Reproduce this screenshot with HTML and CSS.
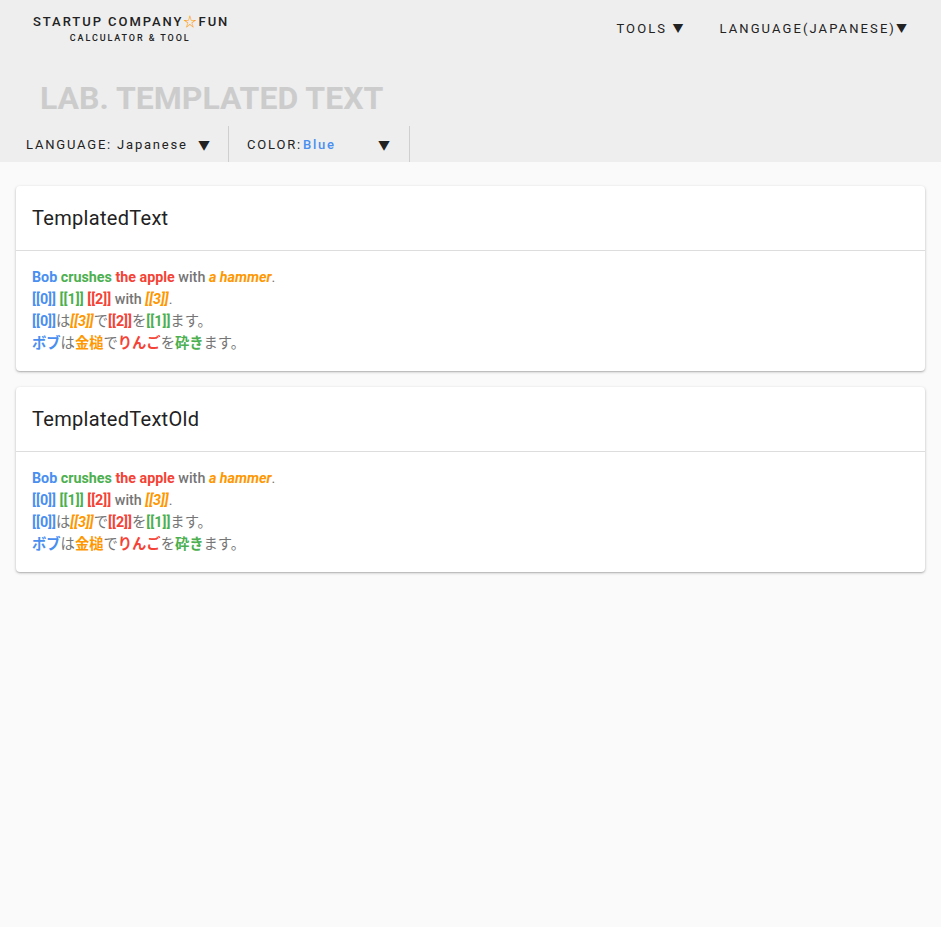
FILE: index.html
```html
<!DOCTYPE html>
<html>
<head>
<meta charset="utf-8">
<link rel="stylesheet" href="styles.css">
</head>
<body>
<header class="header">
  <div class="topbar">
    <div class="logo">
      <div class="logo-main">STARTUP COMPANY<span class="star">☆</span>FUN</div>
      <div class="logo-sub">CALCULATOR &amp; TOOL</div>
    </div>
    <nav class="nav">
      <span class="nav-item">TOOLS <span class="nav-arrow">▼</span></span>
      <span class="nav-item">LANGUAGE(JAPANESE)<span class="nav-arrow">▼</span></span>
    </nav>
  </div>
  <h1 class="title">LAB. TEMPLATED TEXT</h1>
  <div class="toolbar">
    <div class="tool tool-lang"><span>LANGUAGE: Japanese</span><span class="arrow">▼</span></div>
    <div class="tool tool-color"><span>COLOR:<span class="blue-val">Blue</span></span><span class="arrow">▼</span></div>
  </div>
</header>
<main class="main">
  <section class="card">
    <div class="card-head">TemplatedText</div>
    <div class="card-body">
      <div><b class="c-blue">Bob</b> <b class="c-green">crushes</b> <b class="c-red">the apple</b> <span class="c-gray b">with</span> <b class="c-orange i">a hammer</b><span class="c-gray">.</span></div>
      <div><b class="c-blue">[[0]]</b> <b class="c-green">[[1]]</b> <b class="c-red">[[2]]</b> <span class="c-gray b">with</span> <b class="c-orange i">[[3]]</b><span class="c-gray">.</span></div>
      <div><b class="c-blue">[[0]]</b><span class="c-gray">は</span><b class="c-orange i">[[3]]</b><span class="c-gray">で</span><b class="c-red">[[2]]</b><span class="c-gray">を</span><b class="c-green">[[1]]</b><span class="c-gray">ます。</span></div>
      <div><b class="c-blue">ボブ</b><span class="c-gray">は</span><b class="c-orange">金槌</b><span class="c-gray">で</span><b class="c-red">りんご</b><span class="c-gray">を</span><b class="c-green">砕き</b><span class="c-gray">ます。</span></div>
    </div>
  </section>
  <section class="card">
    <div class="card-head">TemplatedTextOld</div>
    <div class="card-body">
      <div><b class="c-blue">Bob</b> <b class="c-green">crushes</b> <b class="c-red">the apple</b> <span class="c-gray b">with</span> <b class="c-orange i">a hammer</b><span class="c-gray">.</span></div>
      <div><b class="c-blue">[[0]]</b> <b class="c-green">[[1]]</b> <b class="c-red">[[2]]</b> <span class="c-gray b">with</span> <b class="c-orange i">[[3]]</b><span class="c-gray">.</span></div>
      <div><b class="c-blue">[[0]]</b><span class="c-gray">は</span><b class="c-orange i">[[3]]</b><span class="c-gray">で</span><b class="c-red">[[2]]</b><span class="c-gray">を</span><b class="c-green">[[1]]</b><span class="c-gray">ます。</span></div>
      <div><b class="c-blue">ボブ</b><span class="c-gray">は</span><b class="c-orange">金槌</b><span class="c-gray">で</span><b class="c-red">りんご</b><span class="c-gray">を</span><b class="c-green">砕き</b><span class="c-gray">ます。</span></div>
    </div>
  </section>
</main>
</body>
</html>
```

FILE: styles.css
```css
* { box-sizing: border-box; }
html, body { margin: 0; padding: 0; }
body {
  background: #fafafa;
  font-family: Roboto, "Noto Sans CJK JP", sans-serif;
  color: #222;
}
.header {
  background: #eeeeee;
  height: 162px;
}
.topbar {
  display: flex;
  justify-content: space-between;
  align-items: flex-start;
  padding: 13px 34px 0 33px;
  height: 64px;
}
.logo {
  display: flex;
  flex-direction: column;
  align-items: center;
}
.logo-main {
  font-size: 13px;
  font-weight: 500;
  letter-spacing: 1.95px;
  color: #222;
  line-height: 17px;
  margin-right: -2px;
}
.star { color: #ff9800; letter-spacing: 0; margin-right: 2px; }
.logo-sub {
  font-size: 9px;
  font-weight: 500;
  letter-spacing: 1.9px;
  color: #222;
  line-height: 12px;
  margin-top: 2px;
}
.nav {
  display: flex;
  gap: 36px;
  padding-top: 7px;
}
.nav-item {
  font-size: 13px;
  font-weight: 400;
  letter-spacing: 2.1px;
  color: #222;
  line-height: 17px;
}
.nav-arrow { font-size: 11px; letter-spacing: 0; }
.title {
  margin: 0;
  padding: 15px 0 0 40px;
  font-size: 32px;
  font-weight: 700;
  color: #cccccc;
  line-height: 38px;
  height: 62px;
}
.toolbar {
  display: flex;
  height: 36px;
}
.tool {
  display: flex;
  align-items: center;
  justify-content: space-between;
  border-right: 1px solid #cfcfcf;
  font-size: 13px;
  letter-spacing: 1.8px;
  color: #222;
}
.tool-lang { width: 229px; padding: 0 18px 0 26px; }
.tool-color { width: 181px; padding: 0 19px 0 18px; }
.arrow { font-size: 12px; letter-spacing: 0; }
.blue-val { color: #4a8ff0; font-weight: 500; margin-left: 1px; }
.main {
  padding: 24px 16px;
  display: flex;
  flex-direction: column;
  gap: 16px;
}
.card {
  background: #fff;
  border-radius: 4px;
  box-shadow: 0 1px 3px rgba(0,0,0,0.25), 0 1px 1px rgba(0,0,0,0.1);
}
.card-head {
  height: 65px;
  padding: 0 16px;
  display: flex;
  align-items: center;
  font-size: 20px;
  letter-spacing: 0.3px;
  color: #222;
  border-bottom: 1px solid #dddddd;
}
.card-body {
  padding: 15px 16px 17px;
  font-size: 14.3px;
  line-height: 22px;
}
b { font-weight: 700; }
.b { font-weight: 500; }
.i { font-style: italic; }
.c-blue { color: #4a8ff0; }
.c-green { color: #4caf50; }
.c-red { color: #f44336; }
.c-orange { color: #ff9800; }
.c-gray { color: #757575; }
```
